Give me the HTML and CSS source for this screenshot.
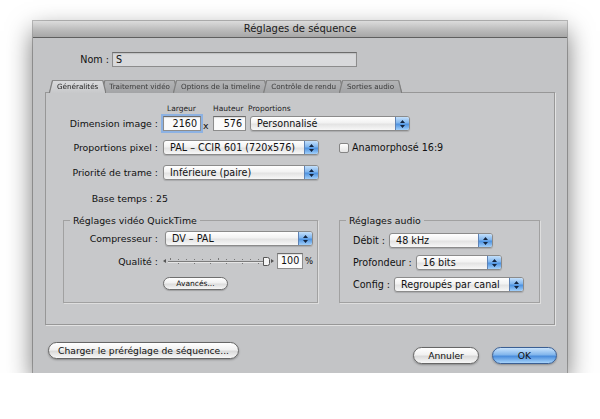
FILE: index.html
```html
<!DOCTYPE html>
<html lang="fr">
  <head>
    <meta charset="UTF-8" />
    <meta name="viewport" content="width=device-width, initial-scale=1.0" />
    <title>Réglages de séquence</title>
    <link rel="stylesheet" href="styles.css">
  </head>
  <body>
    <div class="window">
      <div class="titlebar">Réglages de séquence</div>

      <div class="name-row">
        <span class="name-label">Nom :</span>
        <div class="field name-field">S</div>
      </div>

      <div class="tabs">
        <div class="tab active"><span>Généralités</span></div>
        <div class="tab"><span>Traitement vidéo</span></div>
        <div class="tab"><span>Options de la timeline</span></div>
        <div class="tab"><span>Contrôle de rendu</span></div>
        <div class="tab"><span>Sorties audio</span></div>
      </div>

      <div class="panel">
        <div class="mini-row">
          <span class="mini mini-largeur">Largeur</span>
          <span class="mini mini-hauteur">Hauteur</span>
          <span class="mini">Proportions</span>
        </div>

        <div class="row row-size">
          <span class="label">Dimension image :</span>
          <div class="field num focus w-largeur">2160</div>
          <span class="times">x</span>
          <div class="field num w-hauteur">576</div>
          <div class="popup w-ratio">
            <span class="popup-text">Personnalisé</span>
            <span class="arrows"><svg width="7" height="10" viewBox="0 0 7 10"><path d="M1 4 L3.5 1 L6 4 Z M1 6 L3.5 9 L6 6 Z" /></svg></span>
          </div>
        </div>

        <div class="row row-pixel">
          <span class="label">Proportions pixel :</span>
          <div class="popup w-main">
            <span class="popup-text">PAL – CCIR 601 (720x576)</span>
            <span class="arrows"><svg width="7" height="10" viewBox="0 0 7 10"><path d="M1 4 L3.5 1 L6 4 Z M1 6 L3.5 9 L6 6 Z" /></svg></span>
          </div>
          <label class="check">
            <span class="checkbox"></span>
            Anamorphosé 16:9
          </label>
        </div>

        <div class="row row-field">
          <span class="label">Priorité de trame :</span>
          <div class="popup w-main">
            <span class="popup-text">Inférieure (paire)</span>
            <span class="arrows"><svg width="7" height="10" viewBox="0 0 7 10"><path d="M1 4 L3.5 1 L6 4 Z M1 6 L3.5 9 L6 6 Z" /></svg></span>
          </div>
        </div>

        <div class="row row-base">
          <span class="label label-base">Base temps :</span>
          <span class="value">25</span>
        </div>

        <div class="groups">
          <fieldset class="group group-video">
            <legend>Réglages vidéo QuickTime</legend>

            <div class="group-row">
              <span class="group-label">Compresseur :</span>
              <div class="popup w-codec">
                <span class="popup-text">DV – PAL</span>
                <span class="arrows"><svg width="7" height="10" viewBox="0 0 7 10"><path d="M1 4 L3.5 1 L6 4 Z M1 6 L3.5 9 L6 6 Z" /></svg></span>
              </div>
            </div>

            <div class="group-row quality-row">
              <span class="group-label">Qualité :</span>
              <svg class="slider" width="113" height="12" viewBox="0 0 113 12">
                <path d="M1 6 L4 4 L4 8 Z" fill="#555" />
                <line x1="6" y1="6.5" x2="104" y2="6.5" stroke="#7c7c7c" stroke-width="1" />
                <line x1="6" y1="7.5" x2="104" y2="7.5" stroke="#e6e6e6" stroke-width="1" />
                <g stroke="#777" stroke-width="1">
                  <line x1="8.5" y1="3" x2="8.5" y2="5" />
                  <line x1="16.5" y1="4" x2="16.5" y2="5" />
                  <line x1="24.5" y1="4" x2="24.5" y2="5" />
                  <line x1="32.5" y1="4" x2="32.5" y2="5" />
                  <line x1="40.5" y1="4" x2="40.5" y2="5" />
                  <line x1="48.5" y1="4" x2="48.5" y2="5" />
                  <line x1="56.5" y1="3" x2="56.5" y2="5" />
                  <line x1="64.5" y1="4" x2="64.5" y2="5" />
                  <line x1="72.5" y1="4" x2="72.5" y2="5" />
                  <line x1="80.5" y1="4" x2="80.5" y2="5" />
                  <line x1="88.5" y1="4" x2="88.5" y2="5" />
                  <line x1="96.5" y1="4" x2="96.5" y2="5" />
                  <line x1="16.5" y1="8" x2="16.5" y2="9" />
                  <line x1="32.5" y1="8" x2="32.5" y2="9" />
                  <line x1="48.5" y1="8" x2="48.5" y2="9" />
                  <line x1="64.5" y1="8" x2="64.5" y2="9" />
                  <line x1="80.5" y1="8" x2="80.5" y2="9" />
                  <line x1="96.5" y1="8" x2="96.5" y2="9" />
                </g>
                <path d="M101.5 2.5 H105.5 Q107.5 2.5 107.5 4.5 V8.5 Q107.5 10.5 105.5 10.5 H101.5 Z" fill="#f4f4f4" stroke="#555" />
                <path d="M109 4 L112 6 L109 8 Z" fill="#555" />
              </svg>
              <div class="field num w-quality">100</div>
              <span class="percent">%</span>
            </div>

            <button class="small-button" type="button">Avancés...</button>
          </fieldset>

          <fieldset class="group group-audio">
            <legend>Réglages audio</legend>

            <div class="group-row">
              <span class="audio-label">Débit :</span>
              <div class="popup w-rate">
                <span class="popup-text">48 kHz</span>
                <span class="arrows"><svg width="7" height="10" viewBox="0 0 7 10"><path d="M1 4 L3.5 1 L6 4 Z M1 6 L3.5 9 L6 6 Z" /></svg></span>
              </div>
            </div>

            <div class="group-row">
              <span class="audio-label">Profondeur :</span>
              <div class="popup w-depth">
                <span class="popup-text">16 bits</span>
                <span class="arrows"><svg width="7" height="10" viewBox="0 0 7 10"><path d="M1 4 L3.5 1 L6 4 Z M1 6 L3.5 9 L6 6 Z" /></svg></span>
              </div>
            </div>

            <div class="group-row">
              <span class="audio-label">Config :</span>
              <div class="popup w-config">
                <span class="popup-text">Regroupés par canal</span>
                <span class="arrows"><svg width="7" height="10" viewBox="0 0 7 10"><path d="M1 4 L3.5 1 L6 4 Z M1 6 L3.5 9 L6 6 Z" /></svg></span>
              </div>
            </div>
          </fieldset>
        </div>
      </div>

      <div class="footer">
        <button class="button button-preset" type="button">Charger le préréglage de séquence...</button>
        <button class="button button-cancel" type="button">Annuler</button>
        <button class="button button-ok" type="button">OK</button>
      </div>
    </div>
  </body>
</html>
```

FILE: styles.css
```css
* {
  margin: 0;
  padding: 0;
  box-sizing: border-box;
  font-family: "DejaVu Sans", sans-serif;
}

body {
  background: #ffffff;
  color: #111;
  font-size: 9.4px;
}

.window {
  margin: 21px 0 0 33px;
  width: 534px;
  height: 352px;
  background: #c3c4c6;
  box-shadow: 0 0 0 1px rgba(0, 0, 0, 0.25), 0 10px 24px rgba(0, 0, 0, 0.55);
}

.titlebar {
  height: 17px;
  line-height: 16px;
  text-align: center;
  font-size: 10px;
  color: #1a1a1a;
  background: linear-gradient(#dcdcdc, #b9b9b9 60%, #a7a7a7);
  border-bottom: 1px solid #5f5f5f;
}

.name-row {
  display: flex;
  align-items: center;
  margin-top: 14px;
  gap: 3px;
}

.name-label {
  width: 76px;
  text-align: right;
  font-size: 9.6px;
}

.field {
  height: 15px;
  line-height: 13px;
  background: #fbfbfb;
  border: 1px solid #8c8c8c;
  border-top-color: #6c6c6c;
  box-shadow: inset 0 1px 1px rgba(0, 0, 0, 0.12);
  padding: 0 3px;
  font-size: 9.6px;
}

.name-field {
  width: 245px;
  background: #d8d9db;
}

.num {
  text-align: right;
}

.focus {
  box-shadow: 0 0 0 2px #8db2e3, inset 0 1px 1px rgba(0, 0, 0, 0.12);
}

.tabs {
  display: flex;
  margin: 14px 0 -1px 17px;
  height: 12px;
  position: relative;
  z-index: 1;
}

.tab {
  margin-right: -3px;
  filter: drop-shadow(1px 0 0 #7d7d7d) drop-shadow(-1px 0 0 #7d7d7d) drop-shadow(0 -1px 0 #8a8a8a);
}

.tab span {
  display: block;
  height: 12px;
  line-height: 12px;
  padding: 0 7px;
  font-size: 7.2px;
  color: #3a3a3a;
  background: linear-gradient(#b2b3b5, #a3a4a6);
  clip-path: polygon(3px 0, calc(100% - 3px) 0, 100% 100%, 0 100%);
}

.tab.active {
  z-index: 2;
}

.tab.active span {
  color: #1a1a1a;
  background: linear-gradient(#d8d9db, #c8c9cb);
}

.panel {
  margin-left: 12px;
  width: 510px;
  height: 233px;
  background: #c7c8ca;
  border: 1px solid #979797;
  box-shadow: 1px 1px 0 #e2e2e2;
  padding-top: 11px;
}

.mini-row {
  display: flex;
  height: 10px;
  line-height: 10px;
  padding-left: 121px;
  font-size: 7.5px;
  color: #222;
}

.mini-largeur {
  width: 46px;
}

.mini-hauteur {
  width: 35px;
}

.row {
  display: flex;
  align-items: center;
  height: 15px;
}

.row-size {
  margin-top: 2px;
}

.row-pixel {
  margin-top: 9px;
}

.row-field {
  margin-top: 10px;
}

.row-base {
  margin-top: 11px;
  height: 14px;
}

.label {
  width: 112px;
  text-align: right;
  margin-right: 5px;
}

.label-base {
  width: 107px;
  margin-right: 3px;
}

.w-largeur {
  width: 38px;
}

.w-hauteur {
  width: 33px;
}

.times {
  width: 12px;
  padding-left: 2px;
  margin-top: 3px;
}

.popup {
  display: flex;
  height: 15px;
  background: linear-gradient(#ffffff, #f2f2f2 45%, #e3e3e3 55%, #f7f7f7);
  border: 1px solid #8b8b8b;
  border-radius: 3px;
  box-shadow: 0 1px 1px rgba(0, 0, 0, 0.15);
  overflow: hidden;
}

.popup-text {
  flex: 1;
  line-height: 13px;
  padding-left: 6px;
  font-size: 9.6px;
  white-space: nowrap;
}

.arrows {
  width: 14px;
  display: flex;
  align-items: center;
  justify-content: center;
  border-left: 1px solid #5d82b5;
  background: linear-gradient(#c4e0fb, #7fb5ee 45%, #4d92e0 55%, #a3d0fa);
}

.arrows path {
  fill: #14253f;
}

.w-ratio {
  width: 160px;
  margin-left: 4px;
}

.w-main {
  width: 156px;
}

.check {
  display: flex;
  align-items: center;
  gap: 3px;
  margin-left: 20px;
  font-size: 9.6px;
}

.checkbox {
  width: 10px;
  height: 10px;
  border: 1px solid #858585;
  border-radius: 2px;
  background: linear-gradient(#ffffff, #e4e4e4);
}

.groups {
  display: flex;
  margin: 9px 0 0 17px;
  gap: 21px;
}

.group {
  border: 1px solid #a1a1a1;
  box-shadow: 1px 1px 0 #dedede;
  height: 89px;
  min-width: 0;
}

.group legend {
  margin-left: 6px;
  padding: 0 3px;
  height: 13px;
  line-height: 13px;
  font-size: 9.4px;
}

.group-video {
  width: 255px;
  padding-top: 4px;
}

.group-audio {
  width: 201px;
  padding-top: 6px;
}

.group-audio .group-row {
  padding-left: 13px;
}

.group-row {
  display: flex;
  align-items: center;
  height: 15px;
}

.group-row + .group-row {
  margin-top: 7px;
}

.group-label {
  width: 94px;
  text-align: right;
  margin-right: 7px;
}

.w-codec {
  width: 148px;
}

.quality-row {
  height: 16px;
}

.slider {
  margin-left: -3px;
}

.w-quality {
  width: 26px;
  height: 16px;
  margin-left: 2px;
  line-height: 14px;
}

.percent {
  margin-left: 2px;
  font-size: 8.5px;
}

.small-button {
  display: block;
  margin: 8px 0 0 99px;
  width: 65px;
  height: 13px;
  border: 1px solid #6f6f6f;
  border-radius: 7px;
  background: linear-gradient(#ffffff, #f0f0f0 45%, #dcdcdc 55%, #f6f6f6);
  font-size: 7.5px;
  color: #111;
  box-shadow: 0 1px 1px rgba(0, 0, 0, 0.2);
}

.audio-label {
  margin-right: 4px;
  font-size: 9.6px;
}

.w-rate {
  width: 104px;
}

.w-depth {
  width: 86px;
}

.w-config {
  width: 130px;
}

.footer {
  display: flex;
  align-items: flex-start;
  margin-top: 17px;
  padding: 0 10px 0 15px;
}

.button {
  height: 17px;
  border: 1px solid #666;
  border-radius: 9px;
  background: linear-gradient(#ffffff, #f1f1f1 45%, #dadada 55%, #f7f7f7);
  box-shadow: 0 1px 2px rgba(0, 0, 0, 0.3);
  font-size: 9.2px;
  color: #111;
}

.button-preset {
  width: 191px;
}

.button-cancel {
  width: 66px;
  margin: 5px 0 0 auto;
}

.button-ok {
  width: 65px;
  margin: 5px 0 0 13px;
  border-color: #3b5f93;
  background: linear-gradient(#c9e3fc, #82b6ec 45%, #4a8ddc 55%, #a6d3fb);
}
```
